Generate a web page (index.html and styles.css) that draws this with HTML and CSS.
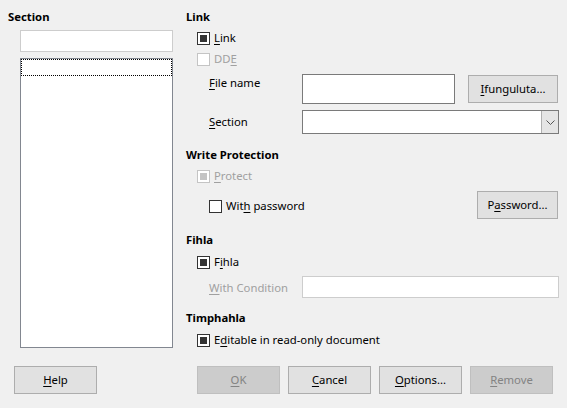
FILE: index.html
```html
<!DOCTYPE html>
<html>
<head>
<meta charset="utf-8">
<link rel="stylesheet" href="styles.css">
</head>
<body>
<div class="dialog">
  <div class="main">
    <div class="left">
      <div class="heading">Section</div>
      <div class="search"></div>
      <div class="list"><div class="focusrow"></div></div>
    </div>
    <div class="right">
      <div class="heading h-link">Link</div>
      <div class="row r-link"><span class="cb checked"></span><span class="lbl"><u>L</u>ink</span></div>
      <div class="row r-dde"><span class="cb disabled"></span><span class="lbl dim">DD<u>E</u></span></div>
      <div class="row r-file">
        <span class="flabel top"><u>F</u>ile name</span>
        <span class="input file"></span>
        <span class="btn b-open"><u>I</u>funguluta...</span>
      </div>
      <div class="row r-sect">
        <span class="flabel"><u>S</u>ection</span>
        <span class="combo"><span class="combo-btn"><svg width="9" height="5" viewBox="0 0 9 5"><path d="M0.5 0.5 L4.5 4.5 L8.5 0.5" fill="none" stroke="#555" stroke-width="1"/></svg></span></span>
      </div>
      <div class="heading h-wp">Write Protection</div>
      <div class="row r-prot"><span class="cb checked disabled"></span><span class="lbl dim"><u>P</u>rotect</span></div>
      <div class="row r-pw">
        <span class="cb sub"></span><span class="lbl">Wit<u>h</u> password</span>
        <span class="spacer"></span>
        <span class="btn b-pw">P<u>a</u>ssword...</span>
      </div>
      <div class="heading h-fihla">Fihla</div>
      <div class="row r-fihla"><span class="cb checked"></span><span class="lbl">F<u>i</u>hla</span></div>
      <div class="row r-cond">
        <span class="flabel dim"><u>W</u>ith Condition</span>
        <span class="input cond"></span>
      </div>
      <div class="heading h-tim">Timphahla</div>
      <div class="row r-edit"><span class="cb checked"></span><span class="lbl">E<u>d</u>itable in read-only document</span></div>
    </div>
  </div>
  <div class="footer">
    <span class="btn fb"><u>H</u>elp</span>
    <span class="fspacer"></span>
    <span class="btn fb off"><u>O</u>K</span>
    <span class="btn fb"><u>C</u>ancel</span>
    <span class="btn fb"><u>O</u>ptions...</span>
    <span class="btn fb off"><u>R</u>emove</span>
  </div>
</div>
</body>
</html>
```
FILE: styles.css
```css
* { box-sizing: border-box; }
html, body { margin: 0; padding: 0; }
body {
  background: #f0f0f0;
  font-family: "Segoe UI", "Noto Sans", "Open Sans", sans-serif;
  font-size: 11.3px;
  color: #000;
  width: 567px;
  height: 408px;
  overflow: hidden;
}
u { text-decoration: underline; text-underline-offset: 2px; }
.dialog { display: flex; flex-direction: column; height: 408px; }
.main { display: flex; height: 366px; }
.left { width: 186px; padding-left: 8px; display: flex; flex-direction: column; }
.heading { font-weight: bold; height: 16px; line-height: 16px; }
.left .heading { margin-top: 9px; }
.search {
  margin-top: 5px; margin-left: 12px; width: 153px; height: 22px;
  background: #fff; border: 1px solid #cdcdcd;
}
.list {
  margin-top: 6px; margin-left: 12px; width: 153px; height: 290px;
  background: #fff; border: 1px solid #828790; padding: 0;
}
.focusrow { height: 17px; border: 1px dotted #000; }

.right { flex: 1; padding-right: 8px; display: flex; flex-direction: column; }
.row { display: flex; align-items: center; padding-left: 11px; }
.lbl { margin-left: 4px; line-height: 16px; white-space: nowrap; }
.dim { color: #a0a0a0; }
.cb {
  width: 13px; height: 13px; border: 1px solid #333; background: #fff;
  flex: none; position: relative;
}
.cb.checked::after {
  content: ""; position: absolute; left: 2px; top: 2px; width: 7px; height: 7px; background: #333;
}
.cb.disabled { border-color: #c4c4c4; }
.cb.checked.disabled::after { background: #c4c4c4; }
.cb.sub { margin-left: 12px; }

.h-link { margin-top: 9px; }
.r-link { height: 26px; }
.r-dde { height: 16px; }
.r-file { margin-top: 7px; height: 30px; align-items: flex-start; }
.flabel { width: 105px; padding-left: 12px; line-height: 16px; flex: none; white-space: nowrap; }
.flabel.top { margin-top: 1px; }
.input { background: #fff; border: 1px solid #7a7a7a; display: block; }
.input.file { width: 153px; height: 30px; }
.btn {
  display: flex; align-items: center; justify-content: center;
  background: #e1e1e1; border: 1px solid #adadad; line-height: 16px; white-space: nowrap;
}
.b-open { width: 90px; height: 28px; margin-left: 13px; margin-top: 1px; }
.r-sect { margin-top: 6px; height: 24px; }
.combo {
  flex: 1; height: 24px; background: #fff; border: 1px solid #7a7a7a; margin-right: 0;
  display: flex; justify-content: flex-end;
}
.combo-btn {
  width: 17px; height: 22px; background: #e5e5e5; border-left: 1px solid #b0b0b0;
  display: flex; align-items: center; justify-content: center;
}
.h-wp { margin-top: 13px; }
.r-prot { margin-top: 5px; height: 16px; }
.r-pw { margin-top: 7px; height: 28px; }
.r-pw .cb { margin-top: 2px; }
.r-pw .lbl { margin-top: 2px; }
.spacer { flex: 1; }
.b-pw { width: 81px; height: 28px; margin-right: 1px; }
.h-fihla { margin-top: 13px; }
.r-fihla { margin-top: 6px; height: 16px; }
.r-cond { margin-top: 6px; height: 22px; }
.r-cond .flabel { margin-top: 2px; }
.input.cond { flex: 1; height: 22px; border-color: #cdcdcd; }
.h-tim { margin-top: 12px; }
.r-edit { margin-top: 6px; height: 16px; }

.footer { display: flex; height: 28px; padding-left: 14px; gap: 8px; }
.fb { width: 83px; height: 28px; flex: none; }
.fspacer { width: 84px; flex: none; }
.btn.off { background: #cccccc; border-color: #bfbfbf; color: #838383; }
```
